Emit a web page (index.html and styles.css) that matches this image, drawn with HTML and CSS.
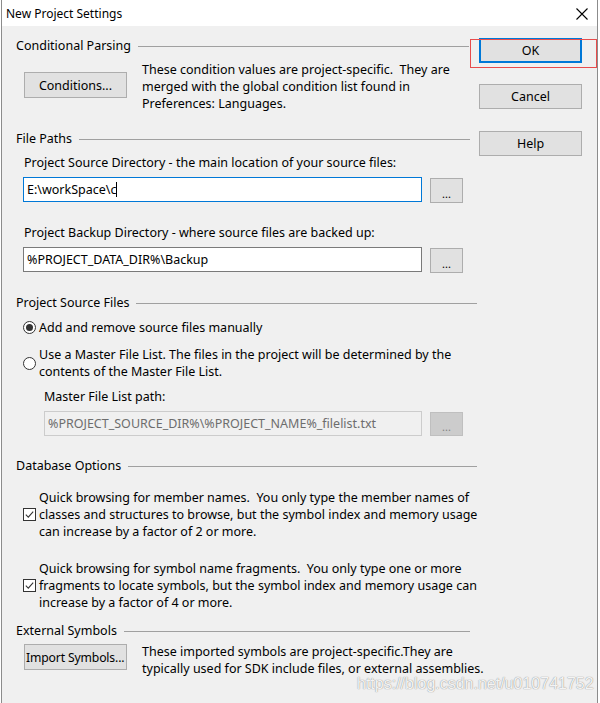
FILE: index.html
```html
<!DOCTYPE html>
<html>
<head>
<meta charset="utf-8">
<title>New Project Settings</title>
<link rel="stylesheet" href="styles.css">
</head>
<body>
<div class="window">
  <div class="titlebar">
    <span class="title">New Project Settings</span>
    <svg class="close" width="12" height="12" viewBox="0 0 12 12"><path d="M0.5 0.5 L11.5 11.5 M11.5 0.5 L0.5 11.5" stroke="#000" stroke-width="1.1" fill="none"/></svg>
  </div>
  <div class="body">
    <div class="main">
      <div class="heading h-cond"><span>Conditional Parsing</span><span class="rule"></span></div>
      <div class="btn-row cond-row">
        <button class="btn btn-wide">Conditions...</button>
        <p class="desc">These condition values are project-specific.&nbsp; They are<br>merged with the global condition list found in<br>Preferences: Languages.</p>
      </div>

      <div class="heading h-paths"><span>File Paths</span><span class="rule"></span></div>
      <div class="field-label">Project Source Directory - the main location of your source files:</div>
      <div class="field-row">
        <div class="textbox focused">E:\workSpace\c<span class="caret"></span></div>
        <button class="btn browse">...</button>
      </div>
      <div class="field-label label-gap">Project Backup Directory - where source files are backed up:</div>
      <div class="field-row">
        <div class="textbox">%PROJECT_DATA_DIR%\Backup</div>
        <button class="btn browse">...</button>
      </div>

      <div class="heading h-src"><span>Project Source Files</span><span class="rule"></span></div>
      <div class="option opt-first">
        <span class="radio checked"></span>
        <span class="opt-text">Add and remove source files manually</span>
      </div>
      <div class="option opt-second">
        <span class="radio"></span>
        <span class="opt-text">Use a Master File List. The files in the project will be determined by the<br>contents of the Master File List.</span>
      </div>
      <div class="field-label sub-label">Master File List path:</div>
      <div class="field-row sub-row">
        <div class="textbox disabled">%PROJECT_SOURCE_DIR%\%PROJECT_NAME%_filelist.txt</div>
        <button class="btn browse btn-disabled">...</button>
      </div>

      <div class="heading h-db"><span>Database Options</span><span class="rule"></span></div>
      <div class="option check-first">
        <svg class="checkbox" width="13" height="13" viewBox="0 0 13 13"><rect x="0.5" y="0.5" width="12" height="12" fill="#fff" stroke="#333"/><path d="M2.8 6.6 L5.3 9.1 L10.2 3.6" stroke="#333" stroke-width="1.1" fill="none"/></svg>
        <span class="opt-text">Quick browsing for member names.&nbsp; You only type the member names of<br>classes and structures to browse, but the symbol index and memory usage<br>can increase by a factor of 2 or more.</span>
      </div>
      <div class="option check-second">
        <svg class="checkbox" width="13" height="13" viewBox="0 0 13 13"><rect x="0.5" y="0.5" width="12" height="12" fill="#fff" stroke="#333"/><path d="M2.8 6.6 L5.3 9.1 L10.2 3.6" stroke="#333" stroke-width="1.1" fill="none"/></svg>
        <span class="opt-text">Quick browsing for symbol name fragments.&nbsp; You only type one or more<br>fragments to locate symbols, but the symbol index and memory usage can<br>increase by a factor of 4 or more.</span>
      </div>

      <div class="heading h-ext"><span>External Symbols</span><span class="rule"></span></div>
      <div class="btn-row import-row">
        <button class="btn btn-wide btn-import">Import Symbols...</button>
        <p class="desc">These imported symbols are project-specific.They are<br>typically used for SDK include files, or external assemblies.</p>
      </div>
    </div>
    <div class="side">
      <button class="btn side-btn default">OK</button>
      <button class="btn side-btn cancel">Cancel</button>
      <button class="btn side-btn help">Help</button>
    </div>
  </div>
  <div class="annotation"></div>
  <div class="watermark">https://blog.csdn.net/u010741752</div>
</div>
</body>
</html>
```

FILE: styles.css
```css
html, body {
  margin: 0;
  padding: 0;
  background: #ffffff;
}

body {
  font-family: "Noto Sans", "Open Sans", "DejaVu Sans", sans-serif;
  font-size: 12.5px;
  line-height: 17px;
  color: #000;
}

.window {
  position: relative;
  margin-left: 1px;
  width: 595px;
  height: 703px;
  border-left: 1px solid #8c8c8c;
  border-right: 1px solid #8c8c8c;
  background: #f0f0f0;
  overflow: hidden;
}

.titlebar {
  height: 26px;
  background: #ffffff;
  display: flex;
  align-items: center;
  justify-content: space-between;
  padding: 0 9px 0 4px;
}

.title {
  font-size: 12px;
}

.close {
  display: block;
  margin-top: 1px;
}

.body {
  display: flex;
}

.main {
  width: 461px;
  padding: 11px 0 0 14px;
}

.heading {
  display: flex;
  align-items: center;
  height: 17px;
  gap: 7px;
  white-space: nowrap;
}

.rule {
  flex: 1;
  height: 0;
  border-top: 1px solid #a0a0a0;
  margin-top: 1px;
}

.h-cond { margin-right: 8px; }
.h-paths { margin-top: 18px; margin-right: 7px; }
.h-src { margin-top: 22px; }
.h-db { margin-top: 21px; }
.h-ext { margin-top: 11px; margin-right: 7px; }

.btn {
  font-family: inherit;
  font-size: 12.5px;
  line-height: 17px;
  color: #000;
  background: #e1e1e1;
  border: 1px solid #adadad;
  padding: 0;
  margin: 0;
  box-sizing: border-box;
  white-space: nowrap;
  flex: none;
}

.btn-row {
  display: flex;
  align-items: flex-start;
}

.cond-row { margin-top: 7px; }
.import-row { margin-top: 4px; }

.btn-wide {
  width: 103px;
  height: 26px;
  margin: 11px 0 0 8px;
}

.btn-import {
  margin-top: 1px;
  text-align: left;
  padding-left: 1px;
  font-size: 12.2px;
  letter-spacing: -0.15px;
}

.desc {
  margin: 0 0 0 15px;
  white-space: nowrap;
}

.field-label {
  margin: 7px 0 0 8px;
  white-space: nowrap;
}

.label-gap { margin-top: 22px; }

.field-row {
  display: flex;
  align-items: flex-start;
  height: 25px;
  margin-top: 6px;
}

.textbox {
  box-sizing: border-box;
  width: 399px;
  height: 25px;
  margin-left: 7px;
  border: 1px solid #7a7a7a;
  background: #fff;
  padding: 3px 0 0 3px;
  white-space: nowrap;
  display: flex;
  align-items: flex-start;
  flex: none;
}

.textbox.focused { border-color: #0078d7; }

.caret {
  display: inline-block;
  width: 1px;
  height: 15px;
  background: #000;
  margin-top: 1px;
}

.browse {
  width: 33px;
  height: 25px;
  margin: 1px 0 0 8px;
  font-size: 11px;
  line-height: 12px;
  padding-top: 6px;
}

.option {
  display: flex;
  align-items: center;
  margin-left: 7px;
  white-space: nowrap;
}

.opt-first { margin-top: 8px; }
.opt-second { margin-top: 10px; }
.check-first { margin-top: 15px; }
.check-second { margin-top: 20px; }

.opt-text { margin-left: 3px; }

.radio {
  box-sizing: border-box;
  width: 13px;
  height: 13px;
  border: 1px solid #333;
  border-radius: 50%;
  background: #fff;
  display: flex;
  align-items: center;
  justify-content: center;
  flex: none;
}

.radio.checked::after {
  content: "";
  width: 7px;
  height: 7px;
  border-radius: 50%;
  background: #333;
}

.checkbox { display: block; flex: none; }

.sub-label { margin: 8px 0 0 28px; }

.sub-row { margin-top: 6px; }

.textbox.disabled {
  width: 378px;
  margin-left: 28px;
  border-color: #cccccc;
  background: #f0f0f0;
  color: #6d6d6d;
  padding-left: 3px;
}

.btn-disabled {
  background: #cccccc;
  border-color: #bfbfbf;
  color: #838383;
  height: 24px;
}

.side {
  display: flex;
  flex-direction: column;
  margin-left: 2px;
  padding-top: 12px;
}

.side-btn {
  width: 103px;
  height: 25px;
}

.default {
  border: 2px solid #0078d7;
}

.cancel { margin-top: 21px; }
.help { margin-top: 22px; }

.annotation {
  position: absolute;
  left: 468px;
  top: 39px;
  width: 127px;
  height: 29px;
  border: 1px solid #e84c4c;
  box-sizing: border-box;
}

.watermark {
  position: absolute;
  left: 355px;
  top: 674px;
  font-family: "Liberation Sans", Arial, sans-serif;
  font-size: 16px;
  line-height: 20px;
  color: rgba(255, 255, 255, 0.92);
  text-shadow: 0 0 1px rgba(90, 90, 90, 0.6), 0 0 1px rgba(90, 90, 90, 0.4);
  white-space: nowrap;
}
```
